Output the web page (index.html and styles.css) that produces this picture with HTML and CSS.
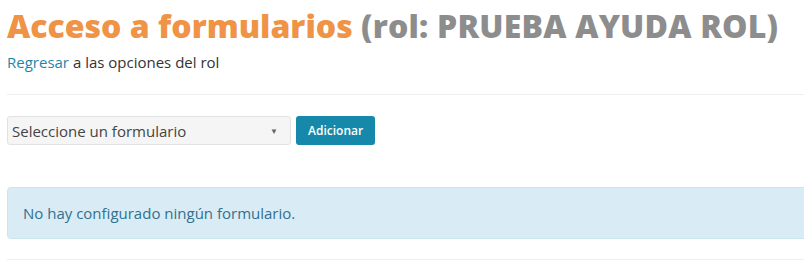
FILE: index.html
```html
<!DOCTYPE html>
<html lang="es">
<head>
    <meta charset="UTF-8">
    <meta name="viewport" content="width=device-width, initial-scale=1.0">
    <title>Acceso a formularios</title>
    <link rel="stylesheet" href="styles.css">
</head>
<body>
    <div class="page">
        <h1 class="title">
            <span class="title-main">Acceso a formularios</span>
            <span class="title-role">(rol: PRUEBA AYUDA ROL)</span>
        </h1>
        <p class="back"><a href="#">Regresar</a> a las opciones del rol</p>
        <hr>
        <form class="add-form">
            <div class="select-box">
                <span>Seleccione un formulario</span>
                <span class="caret">&#9660;</span>
            </div>
            <button type="button" class="btn-add">Adicionar</button>
        </form>
        <div class="alert-info">No hay configurado ningún formulario.</div>
        <hr class="bottom">
    </div>
</body>
</html>
```
FILE: styles.css
```css
body {
    margin: 0;
    font-family: "Open Sans", "Liberation Sans", sans-serif;
    font-size: 15px;
    color: #333;
    background-color: white;
    overflow: hidden;
}

.page {
    width: 1000px;
    padding-left: 7px;
}

.title {
    margin: 6px 0 0;
    font-size: 32px;
    line-height: 40px;
    font-weight: 800;
    white-space: nowrap;
}

.title-main {
    color: #ef9346;
}

.title-role {
    color: #8d8d8d;
    letter-spacing: 0.2px;
}

.back {
    margin: 6px 0 0;
    line-height: 20px;
}

.back a {
    color: #1d87a8;
    text-decoration: none;
}

hr {
    margin: 22px 0 0;
    border: 0;
    border-top: 1px solid #eeeeee;
}

.add-form {
    margin-top: 21px;
    display: flex;
    gap: 5px;
}

.select-box {
    width: 272px;
    height: 27px;
    padding: 0 6px 0 4px;
    display: flex;
    align-items: center;
    justify-content: space-between;
    background-color: #f5f5f5;
    border: 1px solid #e2e2e2;
    border-radius: 3px;
    color: #444;
}

.caret {
    font-size: 8px;
    color: #666;
    margin-right: 6px;
}

.btn-add {
    height: 29px;
    padding: 0 12px;
    background-color: #1689ab;
    border: none;
    border-radius: 3px;
    color: white;
    font-family: inherit;
    font-size: 12px;
    font-weight: 600;
}

.alert-info {
    margin-top: 42px;
    padding: 15px;
    line-height: 20px;
    background-color: #d9ecf5;
    border: 1px solid #c9e6ee;
    border-radius: 4px;
    color: #31708f;
}

hr.bottom {
    margin-top: 20px;
}
```
